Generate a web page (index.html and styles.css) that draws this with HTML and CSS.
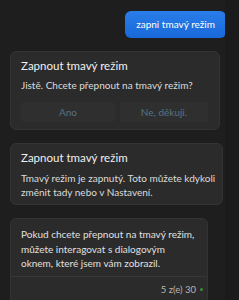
FILE: index.html
```html
<!DOCTYPE html>
<html lang="cs">
<head>
<meta charset="utf-8">
<title>Chat</title>
<link rel="stylesheet" href="styles.css">
</head>
<body>
<div class="chat">
  <div class="user-row">
    <div class="bubble">zapni tmavý režim</div>
  </div>
  <div class="card card-confirm">
    <div class="card-title">Zapnout tmavý režim</div>
    <div class="card-text">Jistě. Chcete přepnout na tmavý režim?</div>
    <div class="actions">
      <div class="action">Ano</div>
      <div class="action">Ne, děkuji.</div>
    </div>
  </div>
  <div class="card card-info">
    <div class="card-title">Zapnout tmavý režim</div>
    <div class="card-text">Tmavý režim je zapnutý. Toto můžete kdykoli změnit tady nebo v Nastavení.</div>
  </div>
  <div class="card card-reply">
    <div class="reply-text">Pokud chcete přepnout na tmavý režim, můžete interagovat s dialogovým oknem, které jsem vám zobrazil.</div>
    <div class="reply-footer">
      <span class="count">5 z(e) 30</span>
      <span class="dot"></span>
    </div>
  </div>
</div>
<div class="rail"></div>
</body>
</html>
```

FILE: styles.css
```css
html, body {
  margin: 0;
  height: 100%;
  overflow: hidden;
}
body {
  background: #1e1e1e;
  font-family: Lato, "Noto Sans", sans-serif;
  color: #e6e6e6;
}
.chat {
  display: flex;
  flex-direction: column;
  align-items: flex-start;
  gap: 13px;
  padding: 11px 0 0 10px;
}
.user-row {
  align-self: stretch;
  display: flex;
  justify-content: flex-end;
  padding-right: 13px;
}
.bubble {
  height: 27px;
  line-height: 26px;
  padding: 0 11px;
  border-radius: 6px;
  background: linear-gradient(180deg, #2a7ee9 0%, #1868d9 100%);
  color: #ffffff;
  font-size: 10px;
}
.card {
  box-sizing: border-box;
  background: #2b2b2b;
  border: 1px solid #333333;
  border-radius: 6px;
}
.card-confirm {
  width: 210px;
  padding: 6px 10px 7px;
}
.card-info {
  width: 213px;
  padding: 6px 6px 5px 10px;
}
.card-reply {
  width: 198px;
}
.card-title {
  font-size: 11.5px;
  line-height: 16px;
  color: #f0f0f0;
}
.card-text {
  margin-top: 4px;
  font-size: 10px;
  line-height: 14px;
  color: #dcdcdc;
}
.card-info .card-text {
  margin-top: 5px;
}
.actions {
  display: flex;
  gap: 5px;
  margin-top: 10px;
}
.action {
  height: 20px;
  line-height: 20px;
  text-align: center;
  background: #2f2f2f;
  border-radius: 3px;
  color: #557384;
  font-size: 10px;
}
.action:first-child {
  width: 94px;
}
.action:last-child {
  width: 88px;
}
.reply-text {
  padding: 8px 10px 5px;
  font-size: 10px;
  line-height: 14.5px;
  color: #e0e0e0;
  border-bottom: 1px solid #383838;
}
.reply-footer {
  display: flex;
  justify-content: flex-end;
  align-items: center;
  gap: 4px;
  padding: 6px 4px 12px;
}
.count {
  font-size: 9.5px;
  line-height: 14px;
  color: #b4b4b4;
}
.dot {
  width: 3px;
  height: 3px;
  border-radius: 50%;
  background: #3f8a3f;
}
.rail {
  position: absolute;
  top: 0;
  right: 0;
  width: 14px;
  height: 100%;
  background: #1b1b1b;
}
```
